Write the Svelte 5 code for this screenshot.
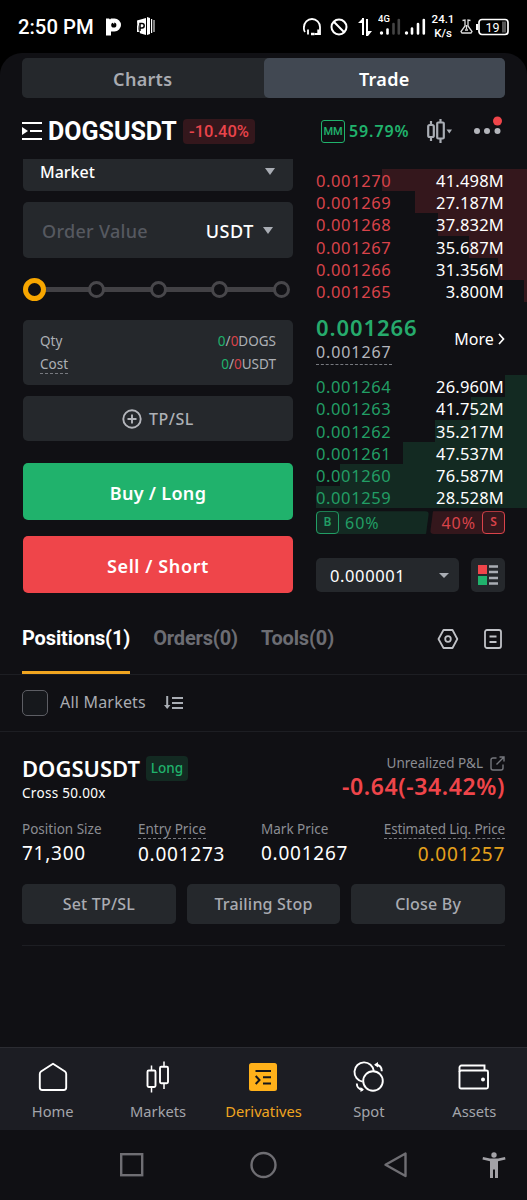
<script lang="ts">
  // depth = width of the depth bar in px, measured from the right edge
  const asks = [
    { price: "0.001270", size: "41.498M", depth: 145 },
    { price: "0.001269", size: "27.187M", depth: 112 },
    { price: "0.001268", size: "37.832M", depth: 89 },
    { price: "0.001267", size: "35.687M", depth: 58 },
    { price: "0.001266", size: "31.356M", depth: 29 },
    { price: "0.001265", size: "3.800M", depth: 3 },
  ];

  const bids = [
    { price: "0.001264", size: "26.960M", depth: 22 },
    { price: "0.001263", size: "41.752M", depth: 56 },
    { price: "0.001262", size: "35.217M", depth: 92 },
    { price: "0.001261", size: "47.537M", depth: 124 },
    { price: "0.001260", size: "76.587M", depth: 187 },
    { price: "0.001259", size: "28.528M", depth: 211 },
  ];

  const stats = [
    { label: "Position Size", value: "71,300", hint: false },
    { label: "Entry Price", value: "0.001273", hint: true },
    { label: "Mark Price", value: "0.001267", hint: false },
    { label: "Estimated Liq. Price", value: "0.001257", hint: true },
  ];

  const tabs = ["Positions(1)", "Orders(0)", "Tools(0)"];
  const navItems = ["Home", "Markets", "Derivatives", "Spot", "Assets"];

  let view = $state("Trade");
  let activeTab = $state("Positions(1)");
  let activeNav = $state("Derivatives");
  let percent = $state(0);
  let allMarkets = $state(false);
</script>

<div class="phone">
  <div class="status">
    <span class="time">2:50 PM</span>
    <svg class="pIcon" width="15" height="18" viewBox="0 0 15 18">
      <path d="M0 .5h3l1 1 1-1h3.500a6.500 6.500 0 0 1 0 13H5V17.500H0z" fill="#fff" />
      <circle cx="7.800" cy="7" r="2.600" fill="#000" />
      <path d="M5.800 3.500h2.400v3z" fill="#fff" />
    </svg>
    <svg class="bookIcon" width="19" height="19" viewBox="0 0 19 19">
      <path d="M1 3.500L10 1v17l-6-1.700M1 3.500v11.500h2" fill="#fff" />
      <path d="M11 0l3 1v16l-3 1zM15 2h1.200v14H15zM17.500 3h1v12h-1z" fill="#fff" />
      <path d="M4 14V6.500h2a2.200 2.200 0 0 1 0 4.400H4" fill="none" stroke="#000" stroke-width="1.500" />
    </svg>

    <div class="statusRight">
      <svg width="18" height="18" viewBox="0 0 18 18" fill="none" stroke="#fff" stroke-width="1.800">
        <path d="M2 14C.5 12 1 9 1 9a8 8 0 0 1 16 0v7h-5.500M5 11.500v5" />
        <path d="M8 16h3.500M15.500 11.500v5" stroke-width="2.400" />
      </svg>
      <svg class="ban" width="18" height="18" viewBox="0 0 18 18" fill="none" stroke="#fff" stroke-width="2">
        <circle cx="9" cy="9" r="7.500" />
        <path d="M3.800 3.800l10.400 10.400" />
      </svg>
      <svg class="arrows" width="14" height="18" viewBox="0 0 14 18" fill="#fff">
        <path d="M4 17V0h2v17zM5 0v5H0zM8 1h2v17H8zM10 18v-5h4z" />
      </svg>
      <svg class="signal" width="48" height="22" viewBox="0 0 48 22">
        <text x="0" y="8" font-size="9.500" font-weight="500" fill="#fff">4G</text>
        <circle cx="3.500" cy="19" r="1.700" fill="#fff" />
        <path d="M9.500 19.500v-4" stroke="#fff" stroke-width="2.600" stroke-linecap="round" />
        <path d="M15.500 19.500V10M20.800 19.500V6" stroke="#444" stroke-width="2.600" stroke-linecap="round" />
        <circle cx="28.500" cy="19" r="1.700" fill="#fff" />
        <path d="M34 19.500v-5M40 19.500V10M45.800 19.500V6" stroke="#fff" stroke-width="2.600" stroke-linecap="round" />
      </svg>
      <div class="speed"><span>24.1</span><span>K/s</span></div>
      <svg class="flask" width="13" height="15" viewBox="0 0 13 15" fill="none" stroke="#ddd" stroke-width="1.300">
        <path d="M2.500 1.500L5 1v6l-4 5.500 1 1.500h9l1-1.500L8 7V1l2.500.5M6.500 6v4M5 11h3" />
      </svg>
      <svg width="33" height="18" viewBox="0 0 33 18">
        <path d="M1 6v6" stroke="#fff" stroke-width="2" />
        <rect x="3" y="1.500" width="29" height="15" rx="3" fill="none" stroke="#fff" stroke-width="1.700" />
        <rect x="26" y="3.500" width="4" height="11" fill="#555" />
        <text x="9.500" y="13.500" font-size="12.500" fill="#fff">19</text>
      </svg>
    </div>
  </div>

  <div class="app">
    <div class="switch">
      {#each ["Charts", "Trade"] as name}
        <button class:on={view === name} onclick={() => (view = name)}>{name}</button>
      {/each}
    </div>

    <header>
      <svg width="20" height="20" viewBox="0 0 20 20" fill="none" stroke="#fff" stroke-width="2.200">
        <path d="M0 2h20M8 10h12M0 18h20" />
        <path d="M0 6l6 4-6 4z" fill="#fff" stroke="none" />
      </svg>
      <h1>DOGSUSDT</h1>
      <span class="change">-10.40%</span>
      <div class="headerRight">
        <span class="mm">MM</span>
        <span class="mmRate">59.79%</span>
        <svg class="candles" width="25" height="26" viewBox="0 0 25 26" fill="none" stroke="#a9adb4" stroke-width="2.200">
          <rect x="1.200" y="7" width="5.600" height="12" rx="1.500" />
          <rect x="10.200" y="4.500" width="6.600" height="16" rx="1" />
          <path d="M4 3v4M4 19v4M13.500 1v3M13.500 21v4" />
          <path d="M19.500 11.500h5.500l-2.700 4z" fill="#a9adb4" stroke="none" />
        </svg>
        <svg class="more" width="29" height="28" viewBox="0 0 29 28">
          <g fill="#b4b6bc">
            <circle cx="4" cy="15" r="3" />
            <circle cx="14" cy="15" r="3" />
            <circle cx="24.500" cy="15" r="3" />
          </g>
          <circle cx="24.500" cy="5" r="4.500" fill="#ef454a" />
        </svg>
      </div>
    </header>

    <div class="trade">
      <div class="form">
        <div class="field market">
          <span>Market</span>
          <i class="caret"></i>
        </div>
        <div class="field value">
          <span class="placeholder">Order Value</span>
          <span class="unit">USDT</span>
          <i class="caret"></i>
        </div>
        <div class="slider">
          {#each [0, 25, 50, 75, 100] as step}
            <button class="dot" class:current={percent === step} aria-label="{step}%" onclick={() => (percent = step)}></button>
          {/each}
        </div>
        <div class="cost">
          <div><span>Qty</span><span><b class="g">0</b>/<b class="r">0</b>DOGS</span></div>
          <div><span class="hint">Cost</span><span><b class="g">0</b>/<b class="r">0</b>USDT</span></div>
        </div>
        <button class="tpsl">
          <svg width="20" height="20" viewBox="0 0 20 20" fill="none" stroke="#b4b6bc" stroke-width="1.900">
            <circle cx="10" cy="10" r="8.700" />
            <path d="M10 5.500v9M5.500 10h9" />
          </svg>
          <span>TP/SL</span>
        </button>
        <button class="order buy">Buy / Long</button>
        <button class="order sell">Sell / Short</button>
      </div>

      <div class="book">
        {#each asks as row}
          <div class="row ask">
            <i style="width: {row.depth}px"></i>
            <span>{row.price}</span>
            <span class="size">{row.size}</span>
          </div>
        {/each}

        <div class="mid">
          <div class="prices">
            <strong>0.001266</strong>
            <span class="hint">0.001267</span>
          </div>
          <span class="moreLink">More
            <svg width="7" height="12" viewBox="0 0 7 12" fill="none" stroke="#fff" stroke-width="1.700"><path d="M1 1l4.500 5L1 11" /></svg>
          </span>
        </div>

        {#each bids as row}
          <div class="row bid">
            <i style="width: {row.depth}px"></i>
            <span>{row.price}</span>
            <span class="size">{row.size}</span>
          </div>
        {/each}

        <div class="ratio">
          <div class="buyers"><b>B</b><span>60%</span></div>
          <div class="sellers"><span>40%</span><b>S</b></div>
        </div>

        <div class="bookTools">
          <div class="tick"><span>0.000001</span><i class="caret"></i></div>
          <div class="layout">
            <svg width="20" height="20" viewBox="0 0 20 20">
              <rect width="9" height="9" fill="#ef454a" />
              <rect y="11" width="9" height="9" fill="#20b26c" />
              <path d="M11 1.500h9M11 7h9M11 13h9M11 18.500h9" stroke="#a9adb4" stroke-width="2.600" />
            </svg>
          </div>
        </div>
      </div>
    </div>

    <div class="tabs">
      {#each tabs as tab}
        <button class:on={activeTab === tab} onclick={() => (activeTab = tab)}>{tab}</button>
      {/each}
      <div class="tabIcons">
        <svg width="22" height="20" viewBox="0 0 22 20" fill="none" stroke="#c0c2c7" stroke-width="1.800">
          <path d="M6.500 1h9l4.800 9-4.800 9h-9L1.500 10z" stroke-linejoin="round" />
          <circle cx="11" cy="10" r="2.800" />
        </svg>
        <svg width="18" height="20" viewBox="0 0 18 20" fill="none" stroke="#c0c2c7" stroke-width="1.800">
          <rect x="1" y="1" width="16" height="18" rx="2" />
          <path d="M5.500 7.500h7M5.500 13h7" />
        </svg>
      </div>
    </div>

    <div class="filter">
      <button class="check" class:checked={allMarkets} aria-label="All Markets" onclick={() => (allMarkets = !allMarkets)}></button>
      <span>All Markets</span>
      <svg width="19" height="14" viewBox="0 0 19 14" fill="none" stroke="#a9adb4" stroke-width="2">
        <path d="M3.200 0v10M8 2h11M8 7h11M8 12h11" />
        <path d="M0 9h6.400l-3.200 4z" fill="#a9adb4" stroke="none" />
      </svg>
    </div>

    <section class="position">
      <div class="posHead">
        <div>
          <div class="posTitle"><h2>DOGSUSDT</h2><span class="side">Long</span></div>
          <p class="lev">Cross 50.00x</p>
        </div>
        <div class="pnl">
          <p><span>Unrealized P&amp;L</span>
            <svg width="15" height="15" viewBox="0 0 15 15" fill="none" stroke="#75777d" stroke-width="1.400">
              <path d="M6.500 2H3a2 2 0 0 0-2 2v8a2 2 0 0 0 2 2h8a2 2 0 0 0 2-2V8.500M9.500 1H14v4.500M14 1L6.500 8.500" />
            </svg>
          </p>
          <strong>-0.64(-34.42%)</strong>
        </div>
      </div>
      <div class="stats">
        {#each stats as stat}
          <div class="stat">
            <span class="label" class:hint={stat.hint}>{stat.label}</span>
            <span class="num">{stat.value}</span>
          </div>
        {/each}
      </div>
      <div class="actions">
        <button>Set TP/SL</button>
        <button>Trailing Stop</button>
        <button>Close By</button>
      </div>
    </section>

    <nav>
      {#each navItems as item}
        <button class:on={activeNav === item} onclick={() => (activeNav = item)}>
          <svg width="32" height="34" viewBox="0 0 32 34" fill="none" stroke="#fff" stroke-width="1.900">
            {#if item === "Home"}
              <path d="M16 3.800L28 11.500a3 3 0 0 1 1.200 2.400V27.500a2.500 2.500 0 0 1-2.500 2.500H5.300a2.500 2.500 0 0 1-2.500-2.500V13.900A3 3 0 0 1 4 11.500z" stroke-linejoin="round" />
            {:else if item === "Markets"}
              <rect x="5.500" y="10.500" width="8" height="16.500" rx="1.200" />
              <rect x="18" y="6.800" width="8" height="16.500" rx="1.200" />
              <path d="M9.500 5.500v5M9.500 27v5.500M22 1.500v5.500M22 23.500v5.500" stroke-width="1.500" />
            {:else if item === "Derivatives"}
              <rect x="2" y="3" width="28" height="28" rx="2.500" fill="#ffb11a" stroke="none" />
              <path d="M8.500 11h15.500M16 17.200h8M16 23.500h8" stroke="#15161b" stroke-width="2" />
              <path d="M8.700 16l3.800 4-3.800 4" stroke="#15161b" stroke-width="2" />
            {:else if item === "Spot"}
              <path d="M9.600 21.600A9.700 9.700 0 1 1 20.800 10.800" />
              <circle cx="20" cy="21" r="9.800" />
              <path d="M22.500 4.800c3.800.2 6.300 2.700 6.300 6.500M3.800 23.500c0 3.800 2.300 5.800 6 6.200" />
              <path d="M21 4.800L25 2v5.500zM11 29.700L7.500 27v5z" fill="#fff" stroke="none" />
            {:else}
              <rect x="1.500" y="10.500" width="28.500" height="18" rx="1.500" />
              <path d="M1.500 12V7.500a2 2 0 0 1 2-2H26.500V10.500" />
              <circle cx="25" cy="19.500" r="2" fill="#fff" stroke="none" />
            {/if}
          </svg>
          <span>{item}</span>
        </button>
      {/each}
    </nav>

    <div class="system">
      <svg width="527" height="70" viewBox="0 0 527 70" fill="none" stroke="#6f6e73" stroke-width="2.400">
        <rect x="121.200" y="24.200" width="21" height="21" />
        <circle cx="263.500" cy="35" r="12" />
        <path d="M405.500 23.500v22.500l-20-11.200z" stroke-linejoin="round" />
        <g fill="#a3a2a7" stroke="none">
          <circle cx="494" cy="25" r="2.700" />
          <path d="M483 27l7 1.500h8l7-1.500.5 2.500-7.500 1.700V48h-3v-8.500h-2V48h-3V31.200l-7.500-1.700z" />
        </g>
      </svg>
    </div>
  </div>
</div>

<style>
  :global(body) {
    background: #000;
  }

  .phone {
    width: 527px;
    height: 1200px;
    overflow: hidden;
    background: #000;
    color: #fff;
    font-family: "Noto Sans", "Open Sans", sans-serif;
  }

  button {
    font: inherit;
    color: inherit;
    border: none;
    background: none;
    padding: 0;
    cursor: pointer;
  }

  h1, h2, p {
    margin: 0;
  }

  .status {
    height: 53px;
    display: flex;
    align-items: center;
    padding: 0 18px;
    box-sizing: border-box;
    font-family: Roboto, sans-serif;
  }

  .time {
    width: 76px;
    font-size: 20.3px;
    font-weight: 500;
    white-space: nowrap;
  }

  .pIcon {
    margin-left: 12px;
  }

  .bookIcon {
    margin-left: 15px;
  }

  .statusRight {
    margin-left: auto;
    display: flex;
    align-items: center;
  }

  .ban {
    margin-left: 9px;
  }

  .arrows {
    margin-left: 10px;
  }

  .signal {
    margin-left: 6px;
    margin-top: -3px;
  }

  .speed {
    width: 22px;
    margin-left: 6px;
    display: flex;
    flex-direction: column;
    align-items: center;
    font-size: 11.5px;
    font-weight: 500;
    line-height: 13.5px;
  }

  .flask {
    margin-left: 6px;
    margin-right: 3px;
  }

  .app {
    height: 1147px;
    background: #101014;
    border-radius: 22px 22px 0 0;
    display: flex;
    flex-direction: column;
    overflow: hidden;
  }

  .switch {
    flex: none;
    display: flex;
    height: 40px;
    margin: 5px 22px 0;
    background: #25282c;
    border-radius: 5px;
  }

  .switch button {
    flex: 1;
    padding-top: 2px;
    border-radius: 5px;
    font-size: 18px;
    font-weight: 600;
    letter-spacing: 0.3px;
    color: #a9abb1;
  }

  .switch .on {
    background: #414852;
    color: #fff;
  }

  header {
    flex: none;
    height: 61px;
    display: flex;
    align-items: center;
    padding: 5px 22px 0;
    box-sizing: border-box;
  }

  h1 {
    width: 129px;
    margin-left: 6px;
    padding-top: 2px;
    font-family: Roboto, sans-serif;
    font-size: 25px;
    line-height: 30px;
    font-weight: 700;
    letter-spacing: 0;
  }

  .change {
    width: 72px;
    height: 25px;
    margin-left: 6px;
    border-radius: 4px;
    background: #34171c;
    color: #e9444b;
    text-align: center;
    font: 500 16.5px/25px Roboto, sans-serif;
  }

  .headerRight {
    margin-left: auto;
    display: flex;
    align-items: center;
    color: #20b26c;
  }

  .mm {
    width: 24px;
    height: 23px;
    box-sizing: border-box;
    border: 1.5px solid #20b26c;
    border-radius: 3px;
    text-align: center;
    font: 500 11px/21px Roboto, sans-serif;
  }

  .mmRate {
    width: 61px;
    margin-left: 4px;
    font-size: 16px;
    font-weight: 600;
    letter-spacing: 0.9px;
  }

  .candles {
    margin-left: 17px;
  }

  .more {
    margin-left: 21px;
    margin-right: 3px;
    margin-top: -2px;
  }

  .trade {
    flex: none;
    display: flex;
    gap: 23px;
    height: 434px;
    padding-left: 23px;
  }

  .form {
    width: 270px;
    display: flex;
    flex-direction: column;
  }

  .field {
    display: flex;
    align-items: center;
    background: #25282c;
    border-radius: 5px;
    box-sizing: border-box;
    font-weight: 500;
  }

  .caret {
    width: 0;
    border: 5px solid transparent;
    border-top: 7px solid #a9adb4;
    border-bottom: 0;
  }

  .market {
    height: 32px;
    border-radius: 0 0 5px 5px;
    padding: 0 18px 7px 17px;
    justify-content: space-between;
    font-size: 16px;
    letter-spacing: 0;
  }

  .value {
    height: 56px;
    margin-top: 11px;
    padding: 1px 20px 0 19px;
    font-size: 18px;
  }

  .placeholder {
    color: #565960;
    font-weight: 500;
    letter-spacing: 0.3px;
  }

  .unit {
    margin-left: auto;
    margin-right: 9px;
    letter-spacing: 0.6px;
  }

  .slider {
    height: 24px;
    margin: 19px 3px 0 0;
    display: flex;
    align-items: center;
    justify-content: space-between;
    background: linear-gradient(#424145, #424145) center / 245px 5px no-repeat;
  }

  .dot {
    width: 17px;
    height: 17px;
    box-sizing: border-box;
    border: 3px solid #48474b;
    border-radius: 50%;
    background: #101014;
  }

  .dot.current {
    width: 23px;
    height: 23px;
    border: 5px solid #f7a600;
    margin-right: -3px;
  }

  .cost {
    height: 65px;
    margin-top: 19px;
    padding: 10px 17px 9px;
    box-sizing: border-box;
    background: #25282c;
    border-radius: 5px;
    color: #adb0b5;
    font-size: 13.5px;
    line-height: 23px;
  }

  .cost div {
    display: flex;
    justify-content: space-between;
    align-items: center;
    height: 23px;
  }

  .cost b {
    font-weight: 400;
  }

  .cost .hint {
    line-height: 17px;
  }

  .g {
    color: #20b26c;
  }

  .r {
    color: #d9434a;
  }

  .hint {
    border-bottom: 1px dashed #77797f;
  }

  .tpsl {
    height: 45px;
    margin-top: 11px;
    display: flex;
    align-items: center;
    justify-content: center;
    gap: 7px;
    background: #25282c;
    border-radius: 5px;
    color: #adb0b5;
    font-size: 16px;
    font-weight: 500;
    letter-spacing: 0.5px;
  }

  .order {
    height: 57px;
    padding-top: 2px;
    border-radius: 5px;
    font-size: 18px;
    font-weight: 600;
    letter-spacing: 0.3px;
  }

  .buy {
    margin-top: 22px;
    background: #20b26c;
  }

  .sell {
    margin-top: 16px;
    background: #ef454a;
    letter-spacing: 0.6px;
  }

  .book {
    width: 211px;
    padding-top: 10px;
  }

  .row {
    position: relative;
    display: flex;
    justify-content: space-between;
    height: 22.2px;
    padding-right: 23px;
    font-size: 16.5px;
    line-height: 24px;
    letter-spacing: 0.6px;
  }

  /* depth bar sits behind the price and size */
  .row i {
    position: absolute;
    top: 0;
    right: 0;
    height: 100%;
  }

  .row span {
    position: relative;
  }

  .row .size {
    letter-spacing: 0.2px;
  }

  .ask {
    color: #d9434a;
  }

  .ask i {
    background: #34171c;
  }

  .bid {
    color: #229e65;
  }

  .bid i {
    background: #132a22;
  }

  .size {
    color: #fff;
  }

  .mid {
    height: 73px;
    padding-right: 22px;
    display: flex;
    justify-content: space-between;
  }

  .prices {
    display: flex;
    flex-direction: column;
    align-items: flex-start;
    padding-top: 12px;
  }

  .prices strong {
    font-size: 22px;
    line-height: 27px;
    font-weight: 600;
    letter-spacing: 0.9px;
    color: #26aa6c;
  }

  .prices span {
    font-size: 16px;
    line-height: 23px;
    letter-spacing: 0.9px;
    color: #b4b6bc;
  }

  .moreLink {
    padding-top: 25px;
    font-size: 16px;
    line-height: 24px;
  }

  .ratio {
    display: flex;
    width: 189px;
    height: 23px;
    margin-top: 3px;
    gap: 1px;
  }

  .ratio div {
    display: flex;
    align-items: center;
    font-size: 16px;
    letter-spacing: 1px;
  }

  .ratio b {
    width: 23px;
    height: 23px;
    box-sizing: border-box;
    border: 1.5px solid;
    border-radius: 4px;
    text-align: center;
    font-size: 12px;
    font-weight: 600;
    line-height: 20px;
    letter-spacing: 0;
  }

  .buyers {
    width: 113px;
    gap: 6px;
    color: #229e65;
    background: #132a22;
    clip-path: polygon(0 0, 100% 0, calc(100% - 3px) 100%, 0 100%);
    border-radius: 4px;
  }

  .sellers {
    flex: 1;
    gap: 6px;
    justify-content: flex-end;
    color: #d9434a;
    background: #34171c;
    clip-path: polygon(3px 0, 100% 0, 100% 100%, 0 100%);
    border-radius: 4px;
  }

  .bookTools {
    display: flex;
    width: 189px;
    justify-content: space-between;
    margin-top: 24px;
  }

  .tick {
    width: 143px;
    height: 34px;
    box-sizing: border-box;
    padding: 1px 10px 0 14px;
    display: flex;
    align-items: center;
    justify-content: space-between;
    background: #25282c;
    border-radius: 5px;
    font-size: 16.5px;
    letter-spacing: 0.6px;
  }

  .tick .caret {
    border-top-width: 5px;
  }

  .layout {
    width: 34px;
    height: 34px;
    display: flex;
    align-items: center;
    justify-content: center;
    background: #25282c;
    border-radius: 5px;
  }

  .tabs {
    flex: none;
    height: 82px;
    box-sizing: border-box;
    padding: 9px 25px 0 22px;
    display: flex;
    gap: 23px;
    border-bottom: 1px solid #1d1e23;
  }

  .tabs button {
    padding-top: 2px;
    font: 700 20px/24px Roboto, sans-serif;
    letter-spacing: -0.15px;
    color: #6c6d73;
    box-sizing: border-box;
    border-bottom: 3px solid transparent;
    height: 72px;
  }

  .tabs .on {
    color: #fff;
    border-color: #f0a520;
  }

  .tabIcons {
    margin-left: auto;
    display: flex;
    align-items: center;
    gap: 25px;
    padding-top: 2px;
  }

  .filter {
    flex: none;
    height: 57px;
    box-sizing: border-box;
    display: flex;
    align-items: center;
    padding: 0 0 1px 22px;
    border-bottom: 1px solid #1d1e23;
    font-size: 16px;
    color: #a9abb1;
  }

  .filter span {
    margin: -2px 18px 0 12px;
    letter-spacing: 0.2px;
  }

  .check {
    width: 26px;
    height: 26px;
    box-sizing: border-box;
    border: 1.5px solid #5d5e64;
    border-radius: 5px;
    background: #16181c;
  }

  .check.checked {
    background: #f7a600;
  }

  .position {
    flex: none;
    height: 214px;
    box-sizing: border-box;
    margin: 0 22px;
    padding-top: 21px;
    border-bottom: 1px solid #1d1e23;
  }

  .posHead {
    display: flex;
    justify-content: space-between;
    height: 67px;
  }

  .posTitle {
    display: flex;
    align-items: center;
    height: 31px;
  }

  h2 {
    width: 118px;
    margin-top: -2px;
    font-size: 22px;
    font-weight: 600;
  }

  .side {
    width: 42px;
    height: 25px;
    margin-left: 6px;
    text-align: center;
    font-size: 13.5px;
    line-height: 25px;
    font-weight: 500;
    border-radius: 4px;
    background: #132a22;
    color: #20b26c;
  }

  .lev {
    font-size: 13.5px;
    line-height: 18px;
    letter-spacing: 0.3px;
  }

  .pnl {
    text-align: right;
  }

  .pnl p {
    display: flex;
    align-items: center;
    justify-content: flex-end;
    gap: 7px;
    height: 20px;
    font-size: 13.5px;
    color: #8b8d93;
  }

  .pnl strong {
    display: block;
    font-size: 23px;
    line-height: 27px;
    font-weight: 600;
    letter-spacing: 0.6px;
    color: #ef454a;
  }

  .stats {
    display: grid;
    grid-template-columns: 116px 123px 120px 1fr;
    height: 64px;
  }

  .stat {
    display: flex;
    flex-direction: column;
    align-items: flex-start;
  }

  .stat:last-child {
    align-items: flex-end;
    white-space: nowrap;
  }

  .stat:last-child .label {
    letter-spacing: -0.15px;
  }

  .stat:last-child .num {
    color: #e5a11c;
  }

  .label {
    font-size: 13.5px;
    line-height: 18px;
    color: #8b8d93;
  }

  .num {
    font-size: 19px;
    line-height: 30px;
    letter-spacing: 0.75px;
  }

  .actions {
    display: grid;
    grid-template-columns: repeat(3, 1fr);
    gap: 11px;
  }

  .actions button {
    height: 40px;
    background: #25282c;
    border-radius: 5px;
    font-size: 16px;
    font-weight: 500;
    letter-spacing: 0.2px;
    color: #a9abb1;
  }

  nav {
    flex: none;
    height: 83px;
    margin-top: auto;
    display: grid;
    grid-template-columns: repeat(5, 1fr);
    box-sizing: border-box;
    background: #1c1d23;
    border-top: 1px solid #2b2c32;
  }

  nav button {
    display: flex;
    flex-direction: column;
    align-items: center;
    padding-top: 12px;
    font-size: 14.7px;
    line-height: 20px;
    color: #a3a5ab;
  }

  nav svg {
    flex: none;
  }

  nav span {
    margin-top: 7px;
  }

  nav .on {
    color: #f0a520;
  }

  .system {
    flex: none;
    height: 70px;
  }

  .system svg {
    display: block;
  }
</style>
